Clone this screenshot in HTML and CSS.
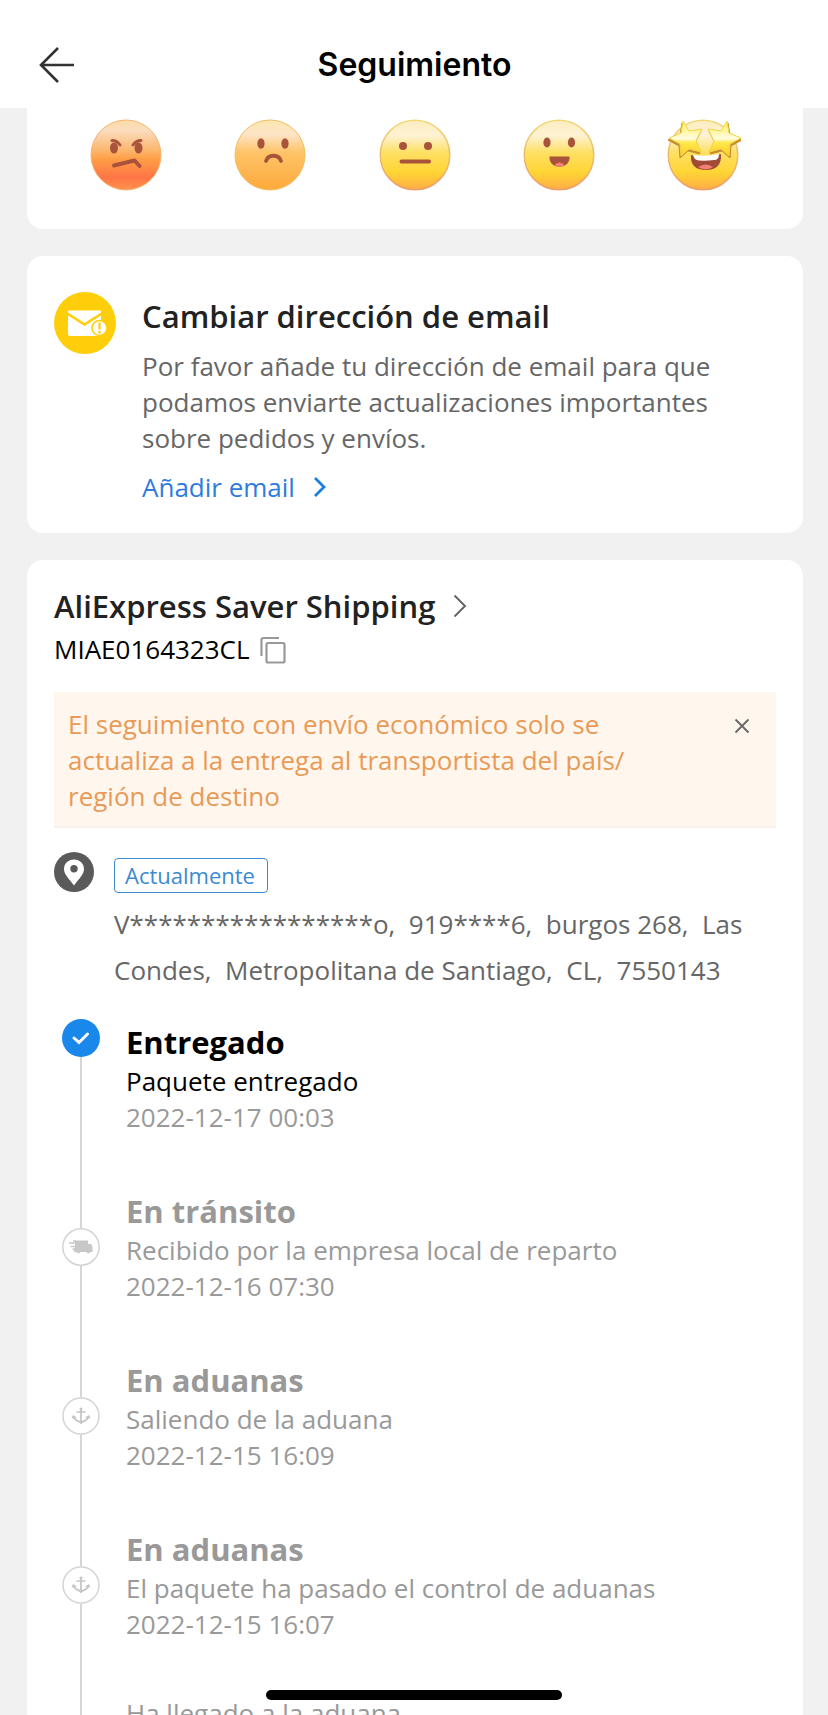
FILE: index.html
```html
<!DOCTYPE html>
<html lang="es">
<head>
<meta charset="utf-8">
<meta name="viewport" content="width=device-width, initial-scale=1">
<title>Seguimiento</title>
<link rel="stylesheet" href="styles.css">
</head>
<body>
<div class="app">
  <header class="header">
    <button class="back" type="button" aria-label="Volver">
      <svg width="36" height="38" viewBox="0 0 36 38" fill="none" stroke="#333" stroke-width="2.6"><path d="M19 2L2 19l17 17M2 19h33"/></svg>
    </button>
    <h1 class="header-title">Seguimiento</h1>
  </header>

  <main class="content">
    <section class="card rating" aria-label="Valoración">
      <svg class="defs" width="0" height="0" aria-hidden="true">
        <defs>
          <linearGradient id="g-angry" x1="0" y1="0" x2="0" y2="1"><stop offset="0" stop-color="#fbdca8"/><stop offset=".15" stop-color="#fbdcbd"/><stop offset=".42" stop-color="#fcb871"/><stop offset=".56" stop-color="#ff9e45"/><stop offset=".82" stop-color="#ff7546"/><stop offset="1" stop-color="#ff9350"/></linearGradient>
          <linearGradient id="g-sad" x1="0" y1="0" x2="0" y2="1"><stop offset="0" stop-color="#fbe7ad"/><stop offset=".2" stop-color="#fde5c7"/><stop offset=".46" stop-color="#fec468"/><stop offset="1" stop-color="#fda93b"/></linearGradient>
          <linearGradient id="g-yellow" x1="0" y1="0" x2="0" y2="1"><stop offset="0" stop-color="#fbedbf"/><stop offset=".22" stop-color="#fef2d4"/><stop offset=".46" stop-color="#fee064"/><stop offset=".75" stop-color="#ffd434"/><stop offset="1" stop-color="#ffad45"/></linearGradient>
          <linearGradient id="g-edge" x1="0" y1="0" x2="0" y2="1"><stop offset="0" stop-color="#f2d876"/><stop offset="1" stop-color="#e9a06a"/></linearGradient>
          <linearGradient id="g-star" x1="0" y1="0" x2="0" y2="1"><stop offset="0" stop-color="#fff04f"/><stop offset=".5" stop-color="#fffbe0"/><stop offset=".62" stop-color="#ffe94a"/><stop offset="1" stop-color="#ffc928"/></linearGradient>
        </defs>
      </svg>
      <button class="face" type="button" aria-label="Muy malo">
        <svg width="76" height="76" viewBox="-38 -38 76 76"><circle r="35" fill="url(#g-angry)" stroke="#f5b36f"/><g fill="#a9533b"><ellipse cx="-12" cy="-7" rx="4" ry="5.500"/><ellipse cx="12.500" cy="-7" rx="4" ry="5.500"/></g><g fill="none" stroke="#a9533b" stroke-width="3" stroke-linecap="round" stroke-linejoin="round"><path d="M-14-14.500q5 0 8 4.500M15-14.500q-5 0-8 4.500"/><path d="M-12 10.500L8.500 5.500l5 5.500" stroke-width="4"/></g></svg>
      </button>
      <button class="face" type="button" aria-label="Malo">
        <svg width="76" height="76" viewBox="-38 -38 76 76"><circle r="35" fill="url(#g-sad)" stroke="#efbf61"/><g fill="#a9533b"><ellipse cx="-9" cy="-11.500" rx="3.600" ry="5.300"/><ellipse cx="15" cy="-11.500" rx="3.600" ry="5.300"/></g><path d="M-4 6c2-7 13-7 15 0" fill="none" stroke="#a9533b" stroke-width="3.800" stroke-linecap="round"/></svg>
      </button>
      <button class="face" type="button" aria-label="Normal">
        <svg width="76" height="76" viewBox="-38 -38 76 76"><circle r="34.800" fill="url(#g-yellow)" stroke="url(#g-edge)" stroke-width="1.500"/><g fill="#a9533b"><circle cx="-12" cy="-9" r="4"/><circle cx="13" cy="-9" r="4"/></g><path d="M-13.500 6.500H14" stroke="#a9533b" stroke-width="4" stroke-linecap="round"/></svg>
      </button>
      <button class="face" type="button" aria-label="Bueno">
        <svg width="76" height="76" viewBox="-38 -38 76 76"><circle r="34.800" fill="url(#g-yellow)" stroke="url(#g-edge)" stroke-width="1.500"/><g fill="#a9533b"><ellipse cx="-12" cy="-12.500" rx="3.600" ry="5"/><ellipse cx="12.500" cy="-12.500" rx="3.600" ry="5"/><path d="M-9.500 1.500h20v2c-1 11-19 11-20 0z"/></g><path d="M-4.500 10q5-5 10 0-5 3.500-10 0z" fill="#f67f78"/></svg>
      </button>
      <button class="face" type="button" aria-label="Excelente">
        <svg width="76" height="76" viewBox="-38 -38 76 76"><circle r="34.800" fill="url(#g-yellow)" stroke="url(#g-edge)" stroke-width="1.500"/>
          <path d="M-12 0Q3 3 18-1q1 16-15 16T-12 0z" fill="#a14a36"/><path d="M-10 0Q3 2 16-1q0 6-5 6Q3 6-4 5.500-9 5-10 0z" fill="#fff"/><path d="M-5 12q8-5 15 0-7 4.500-15 0z" fill="#f67f78"/>
          <g stroke-linejoin="round"><path transform="translate(-1 2)" d="M-20-34l6 10 13-2-6 12 5 11-12-3-8 7-1-12-11-6 12-5z" fill="#c78d2e" stroke="#c78d2e"/><path d="M-20-34l6 10 13-2-6 12 5 11-12-3-8 7-1-12-11-6 12-5z" fill="url(#g-star)" stroke="#eed648"/></g>
          <g stroke-linejoin="round"><path transform="translate(1 2)" d="M24-34l-6 10-13-2 6 12-5 11 12-3 8 7 1-12 11-6-12-5z" fill="#c78d2e" stroke="#c78d2e"/><path d="M24-34l-6 10-13-2 6 12-5 11 12-3 8 7 1-12 11-6-12-5z" fill="url(#g-star)" stroke="#eed648"/></g></svg>
      </button>
    </section>

    <section class="card email">
      <svg class="email-icon" width="62" height="62" viewBox="0 0 62 62"><circle cx="31" cy="31" r="31" fill="#ffce0a"/><path d="M14 19.500q0-1 1-1h31q1 0 1 1v1L30.500 31 14 20.500z" fill="#fff"/><path d="M14 23.500L30.500 34 47 23.500V44H16q-2 0-2-2z" fill="#fff"/><circle cx="45.500" cy="36" r="7.500" fill="#fff" stroke="#ffce0a" stroke-width="1.600"/><path d="M45.500 30.500v7M45.500 39v2.500" stroke="#ffce0a" stroke-width="2.200"/></svg>
      <div class="email-body">
        <h2 class="card-title">Cambiar dirección de email</h2>
        <p class="email-text">Por favor añade tu dirección de email para que podamos enviarte actualizaciones importantes sobre pedidos y envíos.</p>
        <a class="email-link" href="#email">Añadir email
          <svg width="14" height="20" viewBox="0 0 14 20" fill="none" stroke="#1b7fe0" stroke-width="2.800"><path d="M2 1l9 9-9 9"/></svg>
        </a>
      </div>
    </section>

    <section class="card shipping">
      <a class="carrier" href="#carrier">
        <h2 class="card-title">AliExpress Saver Shipping</h2>
        <svg width="14" height="24" viewBox="0 0 14 24" fill="none" stroke="#666" stroke-width="2"><path d="M1.500 1.500L12 12 1.500 22.500"/></svg>
      </a>
      <div class="code">
        <span>MIAE0164323CL</span>
        <button class="copy" type="button" aria-label="Copiar">
          <svg width="26" height="28" viewBox="0 0 26 28" fill="none" stroke="#999" stroke-width="2.200"><path d="M1.500 20V4q0-2 2-2H19"/><rect x="6.500" y="7" width="18" height="19.500" rx="1.500"/></svg>
        </button>
      </div>

      <div class="notice">
        <p class="notice-text">El seguimiento con envío económico solo se actualiza a la entrega al transportista del país/<wbr>región de destino</p>
        <button class="close" type="button" aria-label="Cerrar">
          <svg width="16" height="16" viewBox="0 0 16 16" stroke="#666" stroke-width="1.800"><path d="M1.500 1.500l13 13M14.500 1.500l-13 13"/></svg>
        </button>
      </div>

      <div class="address">
        <svg class="pin" width="40" height="40" viewBox="0 0 40 40"><circle cx="20" cy="20" r="20" fill="#5a5a5a"/><path fill-rule="evenodd" d="M20 7.500c6 0 10 4.300 10 9.600 0 5.400-5 9.900-10 16.400-5-6.500-10-11-10-16.400 0-5.300 4-9.600 10-9.600zm0 5.500a3.700 3.700 0 1 0 0 7.400 3.700 3.700 0 0 0 0-7.400z" fill="#fff"/></svg>
        <div class="address-body">
          <span class="tag">Actualmente</span>
          <p class="address-text">V*****************o,&nbsp; 919****6,&nbsp; burgos 268,&nbsp; Las Condes,&nbsp; Metropolitana de Santiago,&nbsp; CL,&nbsp; 7550143</p>
        </div>
      </div>

      <ol class="timeline">
        <li class="step step-current">
          <div class="rail">
            <svg width="38" height="38" viewBox="0 0 38 38"><circle cx="19" cy="19" r="19" fill="#1a87ea"/><path d="M12 19l5 4.500 8.500-8.500" fill="none" stroke="#fff" stroke-width="3" stroke-linecap="round"/></svg>
          </div>
          <div class="step-body"><h3 class="step-title">Entregado</h3><p class="step-text">Paquete entregado</p><time class="step-time">2022-12-17 00:03</time></div>
        </li>
        <li class="step">
          <div class="rail">
            <svg width="38" height="38" viewBox="0 0 38 38"><circle cx="19" cy="19" r="18.200" fill="#fff" stroke="#d4d4d4" stroke-width="1.500"/><path d="M13 12.500h13V16h3q1.500 1 1.500 4v4h-2a2.200 2.200 0 0 1-4 0h-6a2.200 2.200 0 0 1-4 0H12v-4h1z" fill="#c8c8c8"/><path d="M7 15h7M8.500 18.500H14M11 13h3M10.500 21H14" stroke="#c8c8c8" stroke-width="1.300"/></svg>
          </div>
          <div class="step-body"><h3 class="step-title">En tránsito</h3><p class="step-text">Recibido por la empresa local de reparto</p><time class="step-time">2022-12-16 07:30</time></div>
        </li>
        <li class="step">
          <div class="rail">
            <svg width="38" height="38" viewBox="0 0 38 38"><circle cx="19" cy="19" r="18" fill="#fff" stroke="#d4d4d4" stroke-width="1.500"/><path d="M19 12.500V25M14.500 15h9M11.500 20q2 4 7.500 5 5.500-1 7.500-5" fill="none" stroke="#c4c4c4" stroke-width="1.700"/><circle cx="19" cy="12" r="1.500" fill="#c4c4c4"/><path d="M9.500 21.500l1.500-3.500 4 2.500zM28.500 21.500L27 18l-4 2.500zM16 24h6l-3 3.500z" fill="#c4c4c4"/></svg>
          </div>
          <div class="step-body"><h3 class="step-title">En aduanas</h3><p class="step-text">Saliendo de la aduana</p><time class="step-time">2022-12-15 16:09</time></div>
        </li>
        <li class="step">
          <div class="rail">
            <svg width="38" height="38" viewBox="0 0 38 38"><circle cx="19" cy="19" r="18" fill="#fff" stroke="#d4d4d4" stroke-width="1.500"/><path d="M19 12.500V25M14.500 15h9M11.500 20q2 4 7.500 5 5.500-1 7.500-5" fill="none" stroke="#c4c4c4" stroke-width="1.700"/><circle cx="19" cy="12" r="1.500" fill="#c4c4c4"/><path d="M9.500 21.500l1.500-3.500 4 2.500zM28.500 21.500L27 18l-4 2.500zM16 24h6l-3 3.500z" fill="#c4c4c4"/></svg>
          </div>
          <div class="step-body"><h3 class="step-title">En aduanas</h3><p class="step-text">El paquete ha pasado el control de aduanas</p><time class="step-time">2022-12-15 16:07</time></div>
        </li>
        <li class="step step-untitled">
          <div class="rail"></div>
          <div class="step-body"><p class="step-text">Ha llegado a la aduana</p></div>
        </li>
      </ol>
    </section>
  </main>
  <div class="home-indicator"></div>
</div>
</body>
</html>
```
FILE: styles.css
```css
* {
  box-sizing: border-box;
}

body,
h1,
h2,
h3,
p,
ol {
  margin: 0;
  padding: 0;
}

body {
  background: #f1f1f1;
  color: #000;
  font: 400 26px/36px "Open Sans", "Noto Sans", sans-serif;
}

button {
  display: flex;
  padding: 0;
  border: 0;
  background: none;
  cursor: pointer;
}

a {
  color: inherit;
  text-decoration: none;
}

svg {
  display: block;
  flex: none;
}

.app {
  position: relative;
  display: flex;
  flex-direction: column;
  height: 100vh;
  overflow: hidden;
}

.header {
  display: grid;
  grid-template-columns: 40px 1fr 40px;
  align-items: center;
  flex: none;
  height: 108px;
  padding: 21px 38px 0 39px;
  background: #fff;
}

.header-title {
  grid-column: 2;
  font: 600 32px/40px Inter, sans-serif;
  text-align: center;
}

.content {
  display: flex;
  flex: 1;
  flex-direction: column;
  gap: 27px;
  min-height: 0;
  padding: 0 25px 0 27px;
  overflow-y: auto;
  scrollbar-width: none;
}

.card {
  flex: none;
  padding: 28px 27px;
  border-radius: 16px;
  background: #fff;
}

.card-title {
  color: #222;
  font-size: 31px;
  font-weight: 600;
  line-height: 40px;
}

.rating {
  display: flex;
  padding: 9px 28px 36px 27px;
  border-radius: 0 0 16px 16px;
}

.defs {
  position: absolute;
}

.face {
  flex: 1;
  justify-content: center;
}

.email {
  display: flex;
  gap: 26px;
  padding-top: 36px;
}

.email-body {
  flex: 1;
  padding-top: 4px;
}

.email-text {
  margin-top: 12px;
  color: #666;
}

.email-link {
  display: inline-flex;
  align-items: center;
  gap: 18px;
  margin-top: 13px;
  color: #2e7be0;
}

.shipping {
  padding-top: 26px;
}

.carrier {
  display: flex;
  align-items: center;
  gap: 18px;
}

.code {
  display: flex;
  align-items: center;
  gap: 10px;
  margin-top: 5px;
}

.copy {
  padding-top: 2px;
}

.notice {
  display: flex;
  align-items: flex-start;
  justify-content: space-between;
  margin-top: 25px;
  padding: 14px 26px 12px 14px;
  border-bottom: 2px solid #f4f1ec;
  background: #fff7ed;
  color: #e99a57;
}

.notice-text {
  max-width: 600px;
}

.close {
  padding-top: 12px;
}

.address {
  display: flex;
  gap: 20px;
  margin-top: 24px;
}

.address-body {
  flex: 1;
  padding-top: 6px;
}

.tag {
  display: block;
  width: fit-content;
  padding: 0 12px 0 10px;
  border: 1px solid #3c8ad0;
  border-radius: 4px;
  color: #3c8ad0;
  font-size: 22px;
  line-height: 33px;
}

.address-text {
  margin-top: 8px;
  color: #666;
  line-height: 46px;
}

.timeline {
  margin-top: 26px;
  padding-left: 8px;
  list-style: none;
}

.step {
  display: flex;
  gap: 26px;
  color: #999;
}

.rail {
  display: flex;
  flex-direction: column;
  align-items: center;
  width: 38px;
}

.rail::before,
.rail::after {
  width: 2px;
  height: 40px;
  background: #d6d6d6;
  content: "";
}

.rail::after {
  flex: 1;
}

.step-current .rail::before {
  display: none;
}

.step-body {
  flex: 1;
  padding: 2px 0 53px;
}

.step-untitled .step-body {
  padding-top: 0;
}

.step-title {
  font-size: 31px;
  font-weight: 700;
  line-height: 42px;
}

.step-time {
  display: block;
}

.step-current .step-title,
.step-current .step-text {
  color: #000;
}

.home-indicator {
  position: absolute;
  bottom: 15px;
  left: 50%;
  width: 296px;
  height: 10px;
  border-radius: 5px;
  background: #000;
  transform: translateX(-50%);
}
```
